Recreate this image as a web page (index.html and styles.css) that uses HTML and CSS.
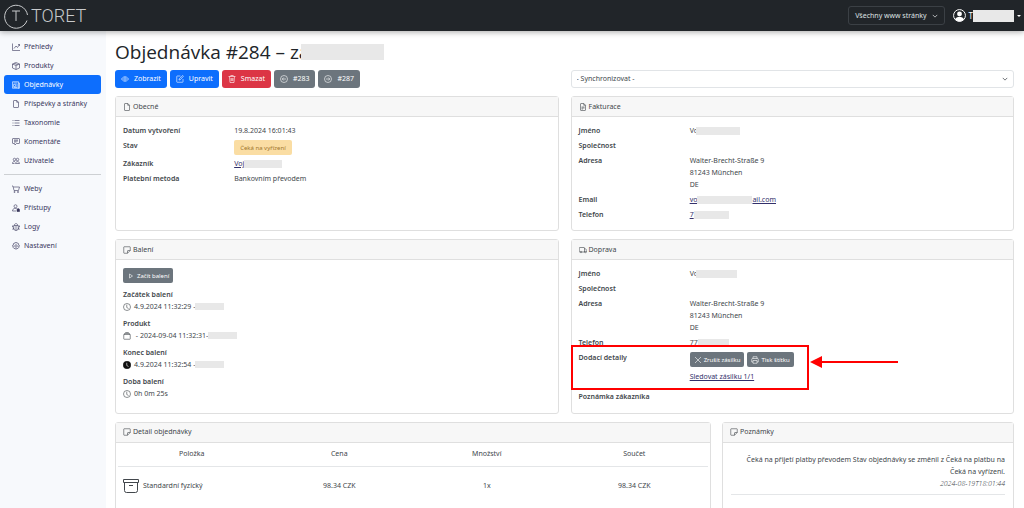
FILE: index.html
```html
<!DOCTYPE html>
<html lang="cs">
<head>
<meta charset="utf-8">
<title>Objednávka #284 – Toret</title>
<link rel="stylesheet" href="styles.css">
</head>
<body>
<svg class="sprite" aria-hidden="true">
  <symbol id="graph" viewBox="0 0 16 16"><path d="M1 1v14h15M4 11l4-5 3 3 4-6M12 3h3v3"/></symbol>
  <symbol id="box" viewBox="0 0 16 16"><path d="M8 1l7 3v8l-7 3-7-3V4zM1 4l7 3 7-3M8 7v8M4.500 2.500l7 3"/></symbol>
  <symbol id="news" viewBox="0 0 16 16"><path d="M1 1.500h12v13H1zM13 4h2v10.500h-3M3 4h8M3 7h4v4H3zM9 7h2M9 9h2M9 11h2M3 13h8"/></symbol>
  <symbol id="file" viewBox="0 0 16 16"><path d="M9.500 1H4a1 1 0 0 0-1 1v12a1 1 0 0 0 1 1h8a1 1 0 0 0 1-1V4.500zM9.500 1v3.500H13"/></symbol>
  <symbol id="filetext" viewBox="0 0 16 16"><path d="M9.500 1H4a1 1 0 0 0-1 1v12a1 1 0 0 0 1 1h8a1 1 0 0 0 1-1V4.500zM9.500 1v3.500H13M5 8h6M5 10h6M5 12h3"/></symbol>
  <symbol id="list" viewBox="0 0 16 16"><path d="M5 3h10M5 8h10M5 13h10M1 3h2M1 8h2M1 13h2"/></symbol>
  <symbol id="chat" viewBox="0 0 16 16"><path d="M2 1h12a1 1 0 0 1 1 1v8a1 1 0 0 1-1 1H9l-3 3-1-3H2a1 1 0 0 1-1-1V2a1 1 0 0 1 1-1zM4 4h8M4 6h8M4 8h5"/></symbol>
  <symbol id="people" viewBox="0 0 16 16"><circle cx="11" cy="5" r="2.500"/><circle cx="5" cy="5" r="2.500"/><path d="M7 13c0-5 8-5 8 0zM1 13c0-4 3-4.500 5-3.500M1 13h4"/></symbol>
  <symbol id="cart" viewBox="0 0 16 16"><path d="M0 2h2l2 9h9l2-7H3"/><circle cx="5" cy="14" r="1.200"/><circle cx="12" cy="14" r="1.200"/></symbol>
  <symbol id="personlock" viewBox="0 0 16 16"><circle cx="7" cy="4.500" r="3"/><path d="M1 14c0-6 7-6 9-4M1 14h7"/><path class="solid" d="M10 11h5v4h-5zM11 11V9.500h3V11"/></symbol>
  <symbol id="bug" viewBox="0 0 16 16"><path d="M3.500 5h9v5.500a4.500 4.500 0 0 1-9 0zM4.500 5c0-5 7-5 7 0M8 5v10M3.500 8H1V5M12.500 8H15V5M4 11H2v3M12 11h2v3"/></symbol>
  <symbol id="gear" viewBox="0 0 16 16"><circle cx="8" cy="8" r="2.500"/><path d="M6.600 1h2.800l.5 1.800 1.600-.9 2 2-.9 1.600 1.900.6v2.900l-1.900.5.9 1.700-2 2-1.600-.9-.5 1.800H6.600l-.6-1.800-1.600.9-2-2 .9-1.700L1.400 9V6.100l1.900-.6-.9-1.600 2-2 1.600.9z"/></symbol>
  <symbol id="eye" viewBox="0 0 16 16"><path d="M1 8c4-6 10-6 14 0-4 6-10 6-14 0z"/><circle cx="8" cy="8" r="2.500"/></symbol>
  <symbol id="edit" viewBox="0 0 16 16"><path d="M9 2H2.500A1 1 0 0 0 1.500 3v10.500a1 1 0 0 0 1 1H13a1 1 0 0 0 1-1V8M6 10l.5-2.500 7-6.500 1.500 1.500-6.500 7z"/></symbol>
  <symbol id="trash" viewBox="0 0 16 16"><path d="M1 3h14M5.500 3V1h5v2M3 3l1 12h8l1-12M6 6l.3 6M8 6v6M10 6l-.3 6"/></symbol>
  <symbol id="left" viewBox="0 0 16 16"><circle cx="8" cy="8" r="7"/><path d="M12 8H4.500M7.500 5l-3 3 3 3"/></symbol>
  <symbol id="right" viewBox="0 0 16 16"><circle cx="8" cy="8" r="7"/><path d="M4 8h7.500M8.500 5l3 3-3 3"/></symbol>
  <symbol id="sticky" viewBox="0 0 16 16"><path d="M2.500 1.500h11a1 1 0 0 1 1 1V9L9 14.500H2.500a1 1 0 0 1-1-1v-11a1 1 0 0 1 1-1zM9 14.500V10a1 1 0 0 1 1-1h4.500"/></symbol>
  <symbol id="truck" viewBox="0 0 16 16"><path d="M3 12H1.500a1 1 0 0 1-1-1V4a1 1 0 0 1 1-1H10a1 1 0 0 1 1 1v8H5M11 5.500h2l2.500 3V12H14"/><circle cx="4" cy="12" r="1.500"/><circle cx="12.500" cy="12" r="1.500"/></symbol>
  <symbol id="play" viewBox="0 0 16 16"><path d="M5 4l6 4-6 4z"/></symbol>
  <symbol id="clock" viewBox="0 0 16 16"><circle cx="8" cy="8" r="7"/><path d="M7.500 3.500V9l3.500 2"/></symbol>
  <symbol id="clockfill" viewBox="0 0 16 16"><circle class="solid" cx="8" cy="8" r="7.500"/><path stroke="#fff" d="M7.500 3.500V9l3.500 2"/></symbol>
  <symbol id="bag" viewBox="0 0 16 16"><path d="M1.500 5h13v8.500a1 1 0 0 1-1 1h-11a1 1 0 0 1-1-1zM3 5V3h10v2M4.500 1h7"/></symbol>
  <symbol id="cross" viewBox="0 0 16 16"><path d="M2 2l12 12M14 2L2 14"/></symbol>
  <symbol id="print" viewBox="0 0 16 16"><path d="M4 5V1.500h8V5M4 12H1.500V6.500a1.500 1.500 0 0 1 1.500-1.500h10a1.500 1.500 0 0 1 1.500 1.500V12H12M4 9h8v5.500H4z"/></symbol>
  <symbol id="archive" viewBox="0 0 16 16"><path d="M.5 1.500h15v3H.5zM1.500 4.500v8a2 2 0 0 0 2 2h9a2 2 0 0 0 2-2v-8M6 7.500h4"/></symbol>
  <symbol id="chevron" viewBox="0 0 16 16"><path d="M2 5l6 6 6-6"/></symbol>
</svg>

<header class="topbar">
  <a class="brand" href="#">
    <svg class="brand-mark" viewBox="0 0 26 26" aria-hidden="true"><path d="M24 17.500A11.500 11.500 0 1 1 24.500 12"/><path d="M9 8h8M13 8v10"/></svg>
    <span>TORET</span>
  </a>
  <div class="topbar-tools">
    <button class="site-switch" type="button">Všechny www stránky <svg class="icon caret-icon"><use href="#chevron"/></svg></button>
    <button class="user-menu" type="button" aria-label="Uživatel">
      <svg class="avatar" viewBox="0 0 16 16"><circle cx="8" cy="8" r="7.300" fill="none" stroke="#fff" stroke-width="1.200"/><circle cx="8" cy="6" r="3" fill="#fff"/><path d="M2.500 13c1.500-4.500 9.500-4.500 11 0-3 3-8 3-11 0z" fill="#fff"/></svg>
      <span class="user-name">T<span class="mask mask-user"></span></span>
      <span class="triangle"></span>
    </button>
  </div>
</header>

<div class="shell">
  <nav class="sidebar">
    <a href="#"><svg class="icon"><use href="#graph"/></svg>Přehledy</a>
    <a href="#"><svg class="icon"><use href="#box"/></svg>Produkty</a>
    <a class="active" href="#"><svg class="icon"><use href="#news"/></svg>Objednávky</a>
    <a href="#"><svg class="icon"><use href="#file"/></svg>Příspěvky a stránky</a>
    <a href="#"><svg class="icon"><use href="#list"/></svg>Taxonomie</a>
    <a href="#"><svg class="icon"><use href="#chat"/></svg>Komentáře</a>
    <a href="#"><svg class="icon"><use href="#people"/></svg>Uživatelé</a>
    <hr>
    <a href="#"><svg class="icon"><use href="#cart"/></svg>Weby</a>
    <a href="#"><svg class="icon"><use href="#personlock"/></svg>Přístupy</a>
    <a href="#"><svg class="icon"><use href="#bug"/></svg>Logy</a>
    <a href="#"><svg class="icon"><use href="#gear"/></svg>Nastavení</a>
  </nav>

  <main class="content">
    <h1>Objednávka #284 – zá<span class="mask mask-title"></span></h1>

    <div class="columns">
      <div class="actions">
        <button class="btn blue" type="button"><svg class="icon"><use href="#eye"/></svg>Zobrazit</button>
        <button class="btn blue" type="button"><svg class="icon"><use href="#edit"/></svg>Upravit</button>
        <button class="btn red" type="button"><svg class="icon"><use href="#trash"/></svg>Smazat</button>
        <button class="btn gray" type="button"><svg class="icon"><use href="#left"/></svg>#283</button>
        <button class="btn gray" type="button"><svg class="icon"><use href="#right"/></svg>#287</button>
      </div>
      <div class="sync">
        <select aria-label="Synchronizovat"><option>- Synchronizovat -</option></select>
        <svg class="icon sync-caret"><use href="#chevron"/></svg>
      </div>

      <section class="card">
        <h2><svg class="icon"><use href="#file"/></svg>Obecné</h2>
        <dl>
          <dt>Datum vytvoření</dt><dd>19.8.2024 16:01:43</dd>
          <dt>Stav</dt><dd class="status"><span class="badge">Čeká na vyřízení</span></dd>
          <dt>Zákazník</dt><dd><a href="#">Voj<span class="mask mask-customer"></span></a></dd>
          <dt>Platební metoda</dt><dd>Bankovním převodem</dd>
        </dl>
      </section>

      <section class="card">
        <h2><svg class="icon"><use href="#filetext"/></svg>Fakturace</h2>
        <dl>
          <dt>Jméno</dt><dd>Vo<span class="mask mask-name"></span></dd>
          <dt>Společnost</dt><dd></dd>
          <dt>Adresa</dt><dd>Walter-Brecht-Straße 9<br>81243 München<br>DE</dd>
          <dt>Email</dt><dd><a href="#">vo<span class="mask mask-mail"></span>ail.com</a></dd>
          <dt>Telefon</dt><dd><a href="#">7</a><span class="mask mask-phone"></span></dd>
        </dl>
      </section>

      <section class="card">
        <h2><svg class="icon"><use href="#sticky"/></svg>Balení</h2>
        <div class="packing">
          <button class="btn small gray" type="button"><svg class="icon"><use href="#play"/></svg>Začít balení</button>
          <h3>Začátek balení</h3>
          <p><svg class="icon"><use href="#clock"/></svg>4.9.2024 11:32:29 -<span class="mask mask-pack"></span></p>
          <h3>Produkt</h3>
          <p><svg class="icon"><use href="#bag"/></svg>&nbsp;- 2024-09-04 11:32:31-<span class="mask mask-pack"></span></p>
          <h3>Konec balení</h3>
          <p><svg class="icon dark"><use href="#clockfill"/></svg>4.9.2024 11:32:54 -<span class="mask mask-pack"></span></p>
          <h3>Doba balení</h3>
          <p><svg class="icon"><use href="#clock"/></svg>0h 0m 25s</p>
        </div>
      </section>

      <section class="card">
        <h2><svg class="icon"><use href="#truck"/></svg>Doprava</h2>
        <dl>
          <dt>Jméno</dt><dd>Vo<span class="mask mask-ship"></span></dd>
          <dt>Společnost</dt><dd></dd>
          <dt>Adresa</dt><dd>Walter-Brecht-Straße 9<br>81243 München<br>DE</dd>
          <dt>Telefon</dt><dd>77<span class="mask mask-tel"></span></dd>
          <dt>Dodací detaily</dt>
          <dd class="delivery">
            <div class="delivery-buttons">
              <button class="btn small gray" type="button"><svg class="icon"><use href="#cross"/></svg>Zrušit zásilku</button>
              <button class="btn small gray" type="button"><svg class="icon"><use href="#print"/></svg>Tisk štítku</button>
            </div>
            <a href="#">Sledovat zásilku 1/1</a>
          </dd>
          <dt>Poznámka zákazníka</dt><dd></dd>
        </dl>
        <div class="highlight"></div>
        <svg class="arrow" viewBox="0 0 88 12" aria-hidden="true"><path d="M0 6L12 0v12z" fill="#f00"/><path d="M10 6h78" stroke="#f00" stroke-width="2"/></svg>
      </section>
    </div>

    <div class="bottom">
      <section class="card">
        <h2><svg class="icon"><use href="#sticky"/></svg>Detail objednávky</h2>
        <table>
          <thead><tr><th>Položka</th><th>Cena</th><th>Množství</th><th>Součet</th></tr></thead>
          <tbody>
            <tr class="product"><td><span class="item"><svg class="icon archive"><use href="#archive"/></svg>Standardní fyzický</span></td><td>98.34 CZK</td><td>1x</td><td>98.34 CZK</td></tr>
            <tr><td><span class="item"><svg class="icon"><use href="#truck"/></svg>DE Home Delivery HD</span></td><td></td><td></td><td>100 CZK</td></tr>
          </tbody>
        </table>
      </section>
      <section class="card">
        <h2><svg class="icon"><use href="#sticky"/></svg>Poznámky</h2>
        <div class="note">
          <p>Čeká na přijetí platby převodem Stav objednávky se změnil z Čeká na platbu na Čeká na vyřízení.</p>
          <time>2024-08-19T18:01:44</time>
        </div>
      </section>
    </div>
  </main>
</div>
</body>
</html>
```
FILE: styles.css
```css
* { box-sizing: border-box; }

body {
  margin: 0;
  height: 100vh;
  overflow: hidden;
  display: flex;
  flex-direction: column;
  background: #fff;
  color: #42474c;
  font: 7px/12px "Noto Sans", "Open Sans", sans-serif;
}

button, select { font: inherit; }
a { color: #33306b; }
h1, h2, h3, p, dl, dd { margin: 0; }

.sprite { position: absolute; width: 0; height: 0; }

.icon {
  width: 8px;
  height: 8px;
  flex: none;
  fill: none;
  stroke: currentColor;
  stroke-width: 1.2;
}
.icon.dark { color: #111; }
.solid { fill: currentColor; }

.mask {
  display: inline-block;
  height: 8px;
  background: #e8e8e8;
  vertical-align: middle;
}
.mask-user { width: 41px; height: 12px; }
.mask-title { width: 83px; height: 16px; margin-left: -8px; }
.mask-customer { width: 38px; }
.mask-name { width: 44px; }
.mask-mail { width: 55px; }
.mask-phone { width: 35px; }
.mask-pack { width: 29px; height: 7px; }
.mask-ship { width: 41px; }
.mask-tel { width: 31px; }
.mask-name, .mask-ship { margin-left: -2px; }

.topbar {
  position: relative;
  flex: none;
  height: 31px;
  padding: 0 3px;
  display: flex;
  align-items: center;
  justify-content: space-between;
  background: #212529;
  box-shadow: 0 1px 6px rgba(0, 0, 0, .35);
}
.brand {
  display: flex;
  align-items: center;
  gap: 2px;
  color: #c8cacc;
  font: 300 18px/26px Roboto, sans-serif;
  text-decoration: none;
}
.brand-mark {
  width: 26px;
  height: 26px;
  fill: none;
  stroke: #c8cacc;
}
.topbar-tools { display: flex; align-items: center; gap: 8px; }
.site-switch {
  height: 19px;
  padding: 0 6px;
  display: flex;
  align-items: center;
  gap: 5px;
  border: 1px solid #3b4045;
  border-radius: 3px;
  background: transparent;
  color: #dee0e2;
}
.caret-icon { width: 6px; height: 6px; stroke-width: 2; }
.user-menu {
  padding: 0;
  display: flex;
  align-items: center;
  gap: 3px;
  border: 0;
  background: transparent;
  color: #fff;
  font-size: 8px;
}
.avatar { width: 13px; height: 13px; }
.user-name { display: flex; align-items: center; }
.triangle {
  border: 2px solid transparent;
  border-top-color: #fff;
  border-bottom: 0;
}

.shell { flex: 1; min-height: 0; display: flex; }

.sidebar {
  flex: none;
  width: 106px;
  padding: 6px 5px 0 4px;
  background: #f7f9fc;
}
.sidebar a {
  height: 19px;
  padding-left: 8px;
  display: flex;
  align-items: center;
  gap: 4px;
  border-radius: 3px;
  color: #39375c;
  text-decoration: none;
}
.sidebar a.active { background: #0d6efd; color: #fff; }
.sidebar hr { margin: 4px 0; border: 0; border-top: 1px solid #cdd0d3; }

.content { flex: 1; min-width: 0; padding: 9px 10px 0 9px; }
h1 {
  height: 24px;
  margin-bottom: 6px;
  display: flex;
  align-items: center;
  color: #212529;
  font-family: "Open Sans", sans-serif;
  font-size: 19px;
  font-weight: 500;
  line-height: 24px;
}

.columns {
  display: grid;
  grid-template-columns: 1fr 1fr;
  gap: 8px 12px;
}
.actions { display: flex; gap: 3px; }
.btn {
  height: 18px;
  padding: 0 6px;
  display: inline-flex;
  align-items: center;
  gap: 5px;
  border: 0;
  border-radius: 3px;
  color: #fff;
}
.blue { background: #0d6efd; }
.red { background: #dc3545; }
.gray { background: #6c757d; }
.btn.small { height: 15px; padding: 0 4px; gap: 2px; border-radius: 2px; font-size: 6px; }

.sync { display: grid; align-items: center; }
.sync > * { grid-area: 1 / 1; }
.sync select {
  width: 100%;
  height: 18px;
  padding: 0 5px;
  appearance: none;
  border: 1px solid #e1e4e7;
  border-radius: 3px;
  background: #fff;
  color: #42474c;
}
.sync-caret {
  width: 6px;
  height: 6px;
  margin-right: 6px;
  justify-self: end;
  stroke-width: 2;
  pointer-events: none;
}

.card {
  position: relative;
  border: 1px solid #dfdfdf;
  border-radius: 3px;
  background: #fff;
}
.card h2 {
  height: 20px;
  padding: 0 7px;
  display: flex;
  align-items: center;
  gap: 2px;
  border-bottom: 1px solid #dfdfdf;
  background: #f7f7f7;
  font-size: 7px;
  font-weight: 400;
}
.card dl {
  padding: 8px 7px 9px;
  display: grid;
  grid-template-columns: 26% 1fr;
  row-gap: 3px;
}
dt, h3 { font-weight: 600; }
dd { min-height: 12px; }
.status { display: flex; }
.badge {
  height: 15px;
  padding: 0 6px;
  display: inline-flex;
  align-items: center;
  border-radius: 2px;
  background: #fadda3;
  color: #a0762c;
  font-size: 6px;
}

.packing { padding: 8px 7px 13px; }
.packing h3 { margin-top: 5px; font-size: 7px; line-height: 12px; }
.packing p { display: flex; align-items: center; }
.packing p .icon { margin-right: 3px; }

.delivery-buttons { margin-bottom: 4px; display: flex; gap: 3px; }
.delivery { padding-bottom: 5px; }
.highlight {
  position: absolute;
  top: 105px;
  left: -1px;
  width: 238px;
  height: 45px;
  border: 2px solid #f00;
}
.arrow {
  position: absolute;
  top: 116px;
  left: 238px;
  width: 88px;
  height: 12px;
}

.bottom {
  margin-top: 8px;
  display: grid;
  grid-template-columns: 596fr 292fr;
  gap: 11px;
}
table {
  width: 100%;
  padding: 0 2px;
  border-spacing: 0;
  table-layout: fixed;
  text-align: center;
}
th { height: 24px; padding: 0; border-bottom: 1px solid #e4e6e8; font-weight: 400; }
td { height: 16px; padding: 0; }
.product td { height: 36px; padding-top: 2px; }
.item { padding-left: 5px; display: flex; align-items: center; gap: 4px; }
.archive { width: 16px; height: 16px; stroke-width: 1; }

.note {
  margin: 11px 8px;
  padding-bottom: 4px;
  border-bottom: 1px solid #e4e6e8;
  text-align: right;
}
.note time { display: block; font-style: italic; font-weight: 300; }
```
